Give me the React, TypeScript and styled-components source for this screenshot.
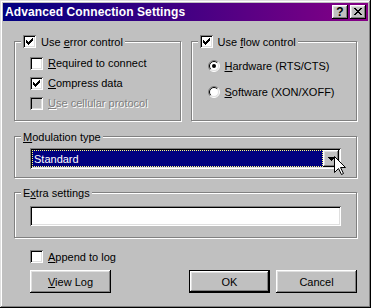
import React from 'react';
import styled, { createGlobalStyle } from 'styled-components';

const GlobalStyle = createGlobalStyle`
  html, body {
    margin: 0;
    padding: 0;
    background: #c0c0c0;
  }
  body {
    font-family: "Liberation Sans", Arial, sans-serif;
    font-size: 11px;
    color: #000;
  }
`;

const raised = `
  box-shadow: inset -1px -1px #000, inset 1px 1px #fff, inset -2px -2px #808080, inset 2px 2px #dfdfdf;
`;

const sunken = `
  box-shadow: inset 1px 1px #808080, inset -1px -1px #fff, inset 2px 2px #000, inset -2px -2px #dfdfdf;
`;

const Window = styled.div`
  box-sizing: border-box;
  width: 371px;
  height: 308px;
  padding: 3px;
  background: #c0c0c0;
  box-shadow: inset -1px -1px #000, inset 1px 1px #dfdfdf, inset -2px -2px #808080, inset 2px 2px #fff;
  display: flex;
  flex-direction: column;
`;

const TitleBar = styled.div`
  height: 18px;
  display: flex;
  align-items: center;
  justify-content: space-between;
  padding: 0 2px;
  background: linear-gradient(to right, #000080, #860086);
  color: #fff;
`;

const Title = styled.span`
  font-weight: bold;
  font-size: 12px;
  letter-spacing: 0.1px;
`;

const TitleButtons = styled.div`
  display: flex;
  gap: 2px;
`;

const TitleButton = styled.div`
  box-sizing: border-box;
  width: 16px;
  height: 14px;
  background: #c0c0c0;
  ${raised}
  display: flex;
  align-items: center;
  justify-content: center;
  color: #000;
  font-weight: bold;
  font-size: 12px;
  line-height: 1;
  padding-bottom: 1px;
`;

const Body = styled.div`
  flex: 1;
  display: flex;
  flex-direction: column;
  padding: 20px 11px 0 11px;
`;

const TopRow = styled.div`
  display: grid;
  grid-template-columns: 1fr 1fr;
  gap: 10px;
`;

const Group = styled.div<{ $mt?: number }>`
  border: 1px solid #808080;
  box-shadow: inset 1px 1px #fff, 1px 1px #fff;
  display: flex;
  flex-direction: column;
  margin-top: ${p => p.$mt ?? 0}px;
`;

const Legend = styled.div`
  align-self: flex-start;
  display: flex;
  align-items: center;
  gap: 5px;
  height: 13px;
  margin: -7px 0 0 6px;
  padding: 0 2px;
  background: #c0c0c0;
`;

const GroupBody = styled.div<{ $pad: string; $gap?: number }>`
  display: flex;
  flex-direction: column;
  gap: ${p => p.$gap ?? 0}px;
  padding: ${p => p.$pad};
`;

const Row = styled.div<{ $h?: number }>`
  display: flex;
  align-items: center;
  gap: 5px;
  height: ${p => p.$h ?? 20}px;
`;

const Label = styled.span<{ $disabled?: boolean }>`
  white-space: nowrap;
  color: ${p => (p.$disabled ? '#808080' : '#000')};
  text-shadow: ${p => (p.$disabled ? '1px 1px 0 #fff' : 'none')};
  u {
    text-decoration: underline;
    text-underline-offset: 1px;
  }
`;

const Box = styled.span<{ $disabled?: boolean }>`
  box-sizing: border-box;
  flex: none;
  width: 13px;
  height: 13px;
  padding: 3px;
  background: ${p => (p.$disabled ? '#c0c0c0' : '#fff')};
  ${sunken}
  display: flex;
`;

const RadioWrap = styled.span`
  flex: none;
  width: 12px;
  height: 12px;
  display: flex;
`;

const Combo = styled.div`
  position: relative;
  box-sizing: border-box;
  height: 21px;
  padding: 2px;
  background: #fff;
  ${sunken}
  display: flex;
`;

const ComboValue = styled.div`
  flex: 1;
  display: flex;
  align-items: center;
  padding-left: 2px;
  background: #000080;
  color: #fff;
  outline: 1px dotted #ffff80;
  outline-offset: -1px;
`;

const ComboButton = styled.div`
  box-sizing: border-box;
  width: 16px;
  background: #c0c0c0;
  ${raised}
  display: flex;
  align-items: center;
  justify-content: center;
`;

const Cursor = styled.svg`
  position: absolute;
  left: 304px;
  top: 8px;
`;

const TextField = styled.div`
  box-sizing: border-box;
  height: 20px;
  background: #fff;
  ${sunken}
`;

const Footer = styled.div`
  display: flex;
  flex-direction: column;
  padding: 12px 0 0 16px;
  gap: 7px;
`;

const ButtonRow = styled.div`
  display: flex;
  gap: 6px;
`;

const Spacer = styled.div`
  flex: 1;
`;

const Button = styled.div<{ $default?: boolean }>`
  box-sizing: border-box;
  width: 81px;
  height: 23px;
  display: flex;
  align-items: center;
  justify-content: center;
  background: #c0c0c0;
  ${p =>
    p.$default
      ? 'box-shadow: inset 0 0 0 1px #000, inset -2px -2px #000, inset 2px 2px #fff, inset -3px -3px #808080, inset 3px 3px #dfdfdf;'
      : raised}
  u {
    text-decoration: underline;
    text-underline-offset: 1px;
  }
`;

const CHECK = 'M6 0h1v1h-1z M5 1h2v1h-2z M0 2h1v1h-1z M4 2h3v1h-3z M0 3h2v1h-2z M3 3h3v1h-3z M0 4h5v1h-5z M1 5h3v1h-3z M2 6h1v1h-1z';
const CLOSE = 'M0 0h2v1h-2z M6 0h2v1h-2z M1 1h2v1h-2z M5 1h2v1h-2z M2 2h4v1h-4z M3 3h2v1h-2z M2 4h4v1h-4z M1 5h2v1h-2z M5 5h2v1h-2z M0 6h2v1h-2z M6 6h2v1h-2z';

function Check({ checked, disabled }: { checked?: boolean; disabled?: boolean }) {
  return (
    <Box $disabled={disabled}>
      {checked && (
        <svg width="7" height="7" viewBox="0 0 7 7" shapeRendering="crispEdges">
          <path d={CHECK} fill="#000" />
        </svg>
      )}
    </Box>
  );
}

function Radio({ checked }: { checked?: boolean }) {
  return (
    <RadioWrap>
      <svg width="12" height="12" viewBox="0 0 12 12">
        <circle cx="6" cy="6" r="5" fill="#fff" />
        <path d="M2.1 9.9 A5.5 5.5 0 0 1 9.9 2.1" fill="none" stroke="#808080" strokeWidth="1" />
        <path d="M9.9 2.1 A5.5 5.5 0 0 1 2.1 9.9" fill="none" stroke="#fff" strokeWidth="1" />
        <path d="M2.8 9.2 A4.5 4.5 0 0 1 9.2 2.8" fill="none" stroke="#000" strokeWidth="1" />
        <path d="M9.2 2.8 A4.5 4.5 0 0 1 2.8 9.2" fill="none" stroke="#dfdfdf" strokeWidth="1" />
        {checked && <circle cx="6" cy="6" r="2" fill="#000" />}
      </svg>
    </RadioWrap>
  );
}

export default function App() {
  return (
    <>
      <GlobalStyle />
      <Window>
        <TitleBar>
          <Title>Advanced Connection Settings</Title>
          <TitleButtons>
            <TitleButton>?</TitleButton>
            <TitleButton>
              <svg width="8" height="7" viewBox="0 0 8 7" shapeRendering="crispEdges">
                <path d={CLOSE} fill="#000" />
              </svg>
            </TitleButton>
          </TitleButtons>
        </TitleBar>

        <Body>
          <TopRow>
            <Group>
              <Legend>
                <Check checked />
                <Label>Use <u>e</u>rror control</Label>
              </Legend>
              <GroupBody $pad="5px 0 7px 15px">
                <Row>
                  <Check />
                  <Label><u>R</u>equired to connect</Label>
                </Row>
                <Row>
                  <Check checked />
                  <Label><u>C</u>ompress data</Label>
                </Row>
                <Row>
                  <Check disabled />
                  <Label $disabled><u>U</u>se cellular protocol</Label>
                </Row>
              </GroupBody>
            </Group>

            <Group>
              <Legend>
                <Check checked />
                <Label>Use <u>f</u>low control</Label>
              </Legend>
              <GroupBody $pad="8px 0 0 16px" $gap={6}>
                <Row>
                  <Radio checked />
                  <Label><u>H</u>ardware (RTS/CTS)</Label>
                </Row>
                <Row>
                  <Radio />
                  <Label><u>S</u>oftware (XON/XOFF)</Label>
                </Row>
              </GroupBody>
            </Group>
          </TopRow>

          <Group $mt={15}>
            <Legend>
              <Label><u>M</u>odulation type</Label>
            </Legend>
            <GroupBody $pad="5px 15px 8px 15px">
              <Combo>
                <ComboValue>Standard</ComboValue>
                <ComboButton>
                  <svg width="7" height="4" viewBox="0 0 7 4" shapeRendering="crispEdges">
                    <path d="M0 0h7v1h-7z M1 1h5v1h-5z M2 2h3v1h-3z M3 3h1v1h-1z" fill="#000" />
                  </svg>
                </ComboButton>
                <Cursor width="13" height="20" viewBox="0 0 13 20">
                  <path
                    d="M0.5 0.5 L0.5 16.5 L4.5 12.5 L7.5 18.5 L9.5 17.5 L6.5 11.5 L11.5 11.5 Z"
                    fill="#fff"
                    stroke="#000"
                    strokeWidth="1"
                  />
                </Cursor>
              </Combo>
            </GroupBody>
          </Group>

          <Group $mt={14}>
            <Legend>
              <Label>E<u>x</u>tra settings</Label>
            </Legend>
            <GroupBody $pad="7px 15px 11px 15px">
              <TextField />
            </GroupBody>
          </Group>

          <Footer>
            <Row $h={13}>
              <Check />
              <Label><u>A</u>ppend to log</Label>
            </Row>
            <ButtonRow>
              <Button><span><u>V</u>iew Log</span></Button>
              <Spacer />
              <Button $default>OK</Button>
              <Button>Cancel</Button>
            </ButtonRow>
          </Footer>
        </Body>
      </Window>
    </>
  );
}
